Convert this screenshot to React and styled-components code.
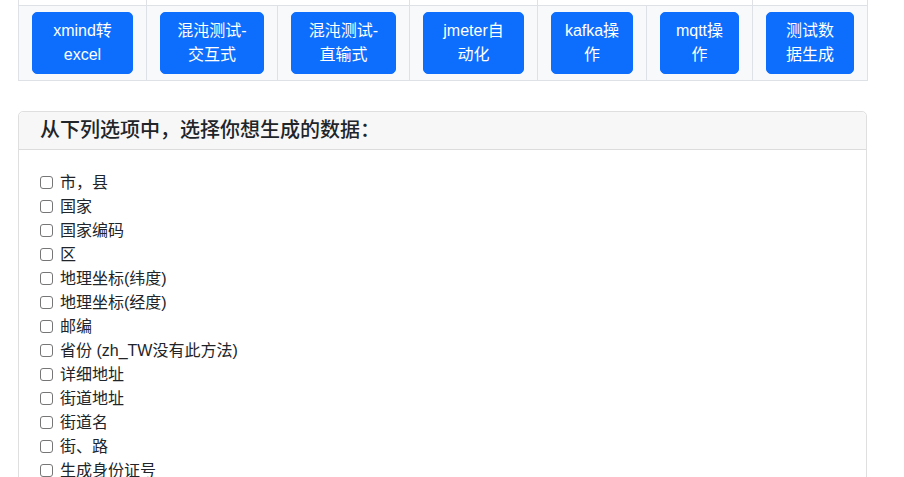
import React from "react";
import styled, { createGlobalStyle } from "styled-components";

const Global = createGlobalStyle`
  html, body { margin: 0; padding: 0; background: #fff; }
  body {
    font-family: "Liberation Sans", "Noto Sans CJK SC", sans-serif;
    color: #212529;
    font-size: 16px;
    line-height: 24px;
  }
`;

const Page = styled.div`
  padding: 0 37px 0 18px;
  width: 849px;
`;

const Table = styled.table`
  border-collapse: collapse;
  table-layout: fixed;
  width: 849px;
  margin: 0 0 30px 0;
`;

const TopCell = styled.td`
  height: 5px;
  padding: 0;
  border: 1px solid #dee2e6;
  border-top: none;
  background: #fff;
  box-sizing: border-box;
`;

const Row = styled.tr`
  background: #f8f9fa;
`;

const Cell = styled.td`
  border: 1px solid #dee2e6;
  padding: 6px 13px;
  text-align: center;
  vertical-align: middle;
`;

const Button = styled.button`
  display: block;
  width: 100%;
  box-sizing: border-box;
  padding: 6px 8px;
  border: 1px solid #0d6efd;
  border-radius: 5px;
  background: #0d6efd;
  color: #fff;
  font-family: "Liberation Sans", "Noto Sans CJK SC", sans-serif;
  font-size: 16px;
  line-height: 24px;
  text-align: center;
  cursor: pointer;
`;

const Card = styled.div`
  border: 1px solid #dfdfdf;
  border-radius: 5px;
  background: #fff;
  min-height: 400px;
`;

const CardHeader = styled.div`
  background: #f7f7f7;
  border-bottom: 1px solid #dcdcdc;
  border-radius: 5px 5px 0 0;
  padding: 6px 21px;
  font-size: 20px;
  line-height: 25px;
  font-weight: 500;
  color: #212529;
`;

const CardBody = styled.div`
  padding: 21px 21px;
`;

const Option = styled.label`
  display: flex;
  align-items: center;
  height: 24px;
  font-size: 16px;
  line-height: 24px;
  color: #212529;
`;

const Box = styled.input`
  appearance: none;
  -webkit-appearance: none;
  width: 13px;
  height: 13px;
  margin: 0 7px 0 0;
  border: 1px solid #767676;
  border-radius: 3px;
  background: #fff;
  box-sizing: border-box;
  flex: none;
`;

const columns = [128, 131, 132, 128, 109, 106, 115];
const topCells = [1, 2, 1, 2, 1];
const buttons = [
  ["xmind转", "excel"],
  ["混沌测试-", "交互式"],
  ["混沌测试-", "直输式"],
  ["jmeter自", "动化"],
  ["kafka操", "作"],
  ["mqtt操", "作"],
  ["测试数", "据生成"],
];

const options = [
  "市，县",
  "国家",
  "国家编码",
  "区",
  "地理坐标(纬度)",
  "地理坐标(经度)",
  "邮编",
  "省份 (zh_TW没有此方法)",
  "详细地址",
  "街道地址",
  "街道名",
  "街、路",
  "生成身份证号",
];

export default function App() {
  return (
    <>
      <Global />
      <Page>
        <Table>
          <colgroup>
            {columns.map((w, i) => (
              <col key={i} style={{ width: w }} />
            ))}
          </colgroup>
          <tbody>
            <tr>
              {topCells.map((span, i) => (
                <TopCell key={i} colSpan={span} />
              ))}
            </tr>
            <Row>
              {buttons.map(([a, b], i) => (
                <Cell key={i}>
                  <Button>
                    {a}
                    <br />
                    {b}
                  </Button>
                </Cell>
              ))}
            </Row>
          </tbody>
        </Table>
        <Card>
          <CardHeader>从下列选项中，选择你想生成的数据：</CardHeader>
          <CardBody>
            {options.map((o) => (
              <Option key={o}>
                <Box type="checkbox" />
                {o}
              </Option>
            ))}
          </CardBody>
        </Card>
      </Page>
    </>
  );
}
